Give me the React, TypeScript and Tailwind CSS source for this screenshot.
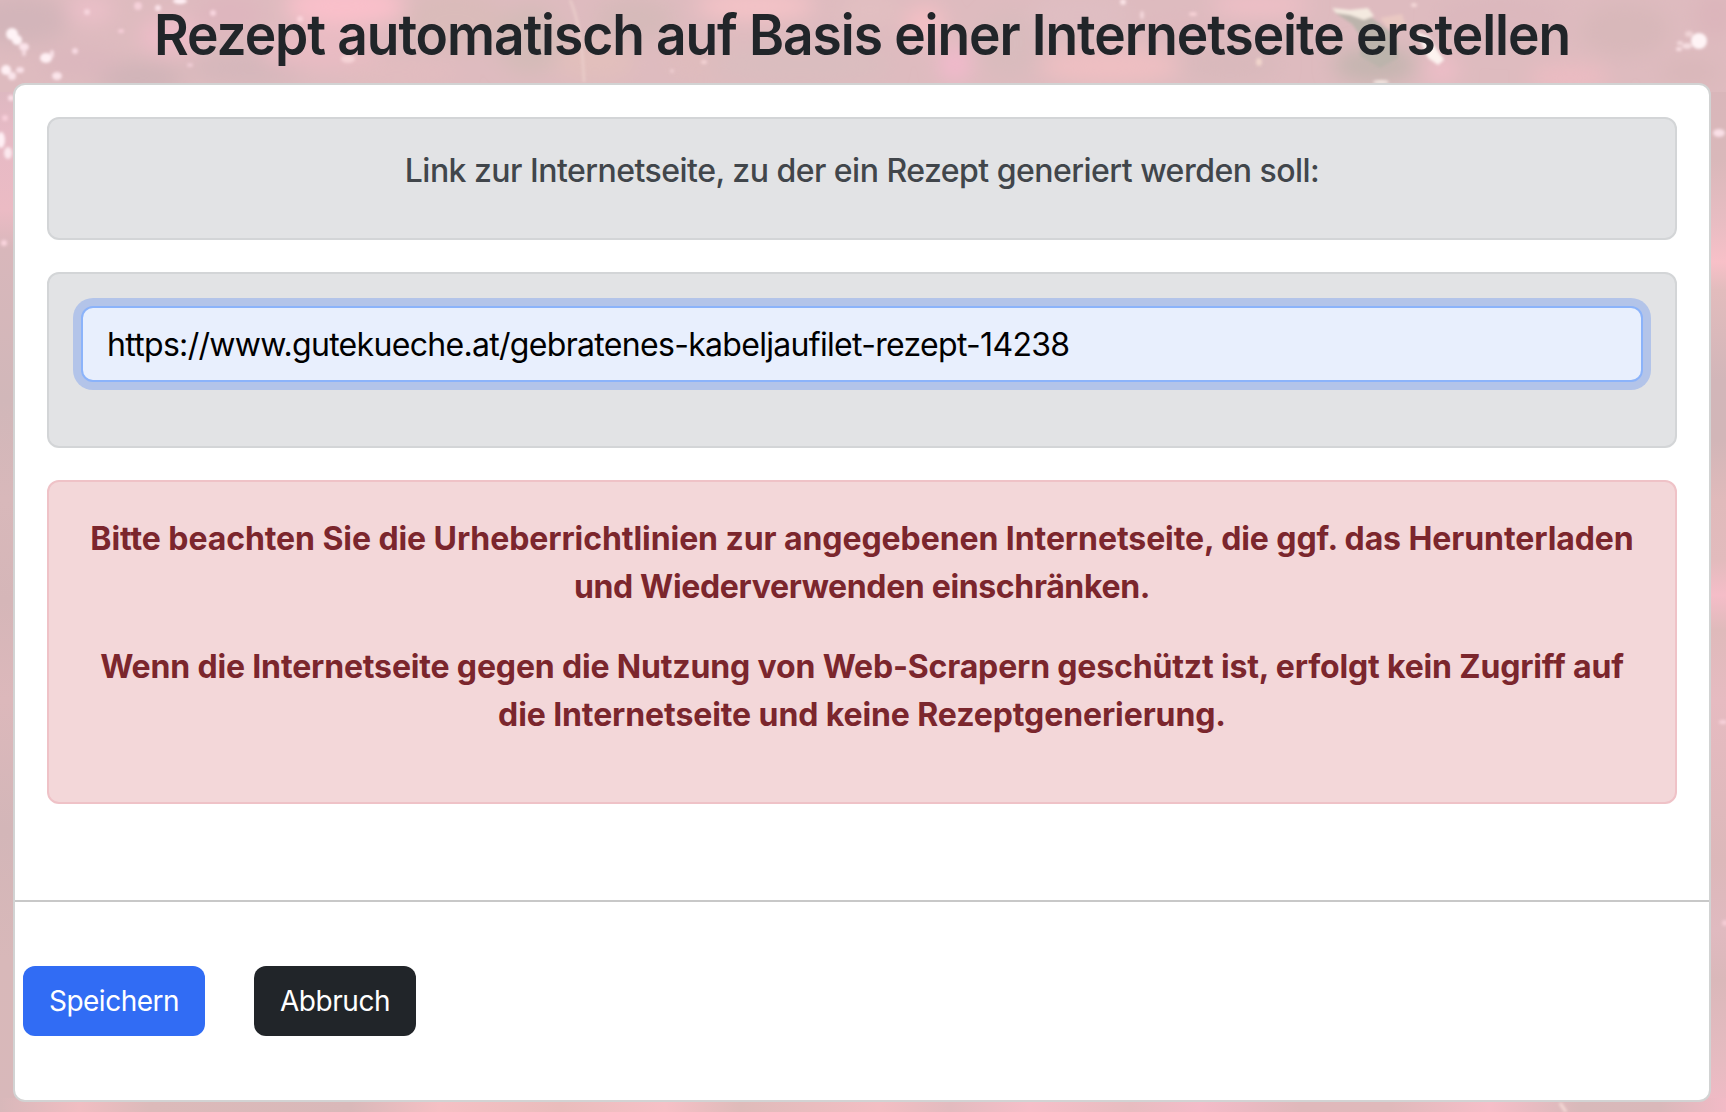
import React from 'react';

type Blob = { x: number; y: number; rx: number; ry: number; fill: string };
type Stop = [number, string];

const blobs: Blob[] = [
  { x: 20, y: 20, rx: 50, ry: 25, fill: '#d3b5ba' },
  { x: 90, y: 10, rx: 24, ry: 12, fill: '#ecbfc9' },
  { x: 140, y: 78, rx: 45, ry: 16, fill: '#d0b4b8' },
  { x: 170, y: 36, rx: 30, ry: 18, fill: '#eebcc8' },
  { x: 80, y: 62, rx: 40, ry: 16, fill: '#dcb7be' },
  { x: 230, y: 15, rx: 35, ry: 20, fill: '#deb6be' },
  { x: 250, y: 68, rx: 60, ry: 18, fill: '#d5b7bb' },
  { x: 345, y: 6, rx: 60, ry: 20, fill: '#fac0ca' },
  { x: 320, y: 50, rx: 60, ry: 20, fill: '#e9bbc3' },
  { x: 400, y: 72, rx: 60, ry: 14, fill: '#e2bcbf' },
  { x: 455, y: 20, rx: 50, ry: 30, fill: '#dabbba' },
  { x: 530, y: 40, rx: 34, ry: 34, fill: '#d4bbb8' },
  { x: 595, y: 60, rx: 40, ry: 20, fill: '#e2bfbc' },
  { x: 635, y: 20, rx: 40, ry: 22, fill: '#d6bab9' },
  { x: 700, y: 60, rx: 40, ry: 20, fill: '#dfbcbd' },
  { x: 755, y: 6, rx: 60, ry: 14, fill: '#f5c3c7' },
  { x: 800, y: 65, rx: 90, ry: 20, fill: '#dabdbf' },
  { x: 870, y: 10, rx: 30, ry: 16, fill: '#e2bfc1' },
  { x: 925, y: 25, rx: 20, ry: 20, fill: '#f4bfc5' },
  { x: 955, y: 64, rx: 16, ry: 18, fill: '#f2b9cc' },
  { x: 1010, y: 45, rx: 30, ry: 34, fill: '#d9bbbd' },
  { x: 1080, y: 15, rx: 50, ry: 20, fill: '#dfbec2' },
  { x: 1110, y: 66, rx: 70, ry: 18, fill: '#efbfc2' },
  { x: 1185, y: 32, rx: 40, ry: 12, fill: '#dfb8be' },
  { x: 1260, y: 5, rx: 50, ry: 10, fill: '#f2c0c8' },
  { x: 1230, y: 65, rx: 50, ry: 18, fill: '#d9b9bc' },
  { x: 1375, y: 65, rx: 42, ry: 18, fill: '#c5b5b0' },
  { x: 1442, y: 70, rx: 16, ry: 14, fill: '#efbdc8' },
  { x: 1500, y: 20, rx: 65, ry: 26, fill: '#dcb8bd' },
  { x: 1570, y: 78, rx: 40, ry: 14, fill: '#ecbcc2' },
  { x: 1625, y: 30, rx: 45, ry: 26, fill: '#d8b8ba' },
  { x: 1690, y: 72, rx: 30, ry: 14, fill: '#d9b7ba' },
  { x: 1715, y: 15, rx: 20, ry: 24, fill: '#dcb5bb' },
];

const flecks: Blob[] = [
  { x: 12, y: 34, rx: 6, ry: 6, fill: '#fff3f6' },
  { x: 17, y: 40, rx: 5, ry: 5, fill: '#fff3f6' },
  { x: 24, y: 47, rx: 5, ry: 4, fill: '#fbe3ea' },
  { x: 24, y: 53, rx: 2, ry: 3, fill: '#f6dbe2' },
  { x: 46, y: 58, rx: 6, ry: 5, fill: '#fff0f4' },
  { x: 52, y: 54, rx: 2, ry: 4, fill: '#f8e0e6' },
  { x: 6, y: 70, rx: 5, ry: 5, fill: '#fff0f4' },
  { x: 12, y: 76, rx: 4, ry: 4, fill: '#fae4ea' },
  { x: 20, y: 70, rx: 4, ry: 3, fill: '#f9e0e7' },
  { x: 57, y: 76, rx: 5, ry: 4, fill: '#fbe4ea' },
  { x: 75, y: 51, rx: 3, ry: 3, fill: '#f8dae2' },
  { x: 87, y: 12, rx: 3, ry: 3, fill: '#f7d5dd' },
  { x: 121, y: 31, rx: 3, ry: 2, fill: '#f6ced8' },
  { x: 138, y: 6, rx: 4, ry: 4, fill: '#f5d0d9' },
  { x: 158, y: 8, rx: 3, ry: 3, fill: '#fbe3ea' },
  { x: 180, y: 1, rx: 7, ry: 3, fill: '#fff0f4' },
  { x: 213, y: 13, rx: 3, ry: 3, fill: '#f8d5df' },
  { x: 190, y: 65, rx: 3, ry: 2, fill: '#efccd4' },
  { x: 300, y: 19, rx: 3, ry: 3, fill: '#fbd3da' },
  { x: 348, y: 59, rx: 7, ry: 4, fill: '#f5d3d6' },
  { x: 704, y: 62, rx: 3, ry: 2, fill: '#f4d3d5' },
  { x: 672, y: 71, rx: 2, ry: 2, fill: '#efcfd1' },
  { x: 1123, y: 2, rx: 3, ry: 3, fill: '#fae3e6' },
  { x: 1142, y: 15, rx: 2, ry: 4, fill: '#f3d6da' },
  { x: 1193, y: 14, rx: 4, ry: 2, fill: '#f7d2d6' },
  { x: 1259, y: 62, rx: 3, ry: 4, fill: '#f1d5cc' },
  { x: 1414, y: 5, rx: 3, ry: 2, fill: '#f5d9d9' },
  { x: 1381, y: 82, rx: 8, ry: 2, fill: '#f3e6e1' },
  { x: 1699, y: 41, rx: 8, ry: 8, fill: '#fff4f6' },
  { x: 1687, y: 46, rx: 5, ry: 3, fill: '#f5dde0' },
  { x: 1679, y: 49, rx: 3, ry: 2, fill: '#f8dee2' },
  { x: 1680, y: 43, rx: 3, ry: 2, fill: '#f3d9dc' },
  { x: 1689, y: 34, rx: 4, ry: 3, fill: '#f0d3d6' },
  { x: 11, y: 98, rx: 3, ry: 3, fill: '#fce0e8' },
  { x: 5, y: 118, rx: 3, ry: 3, fill: '#f8cfda' },
  { x: 1, y: 140, rx: 4, ry: 8, fill: '#fff0f5' },
  { x: 8, y: 153, rx: 4, ry: 6, fill: '#fce8ee' },
  { x: 4, y: 243, rx: 3, ry: 3, fill: '#fad5de' },
  { x: 1719, y: 133, rx: 6, ry: 4, fill: '#fae0e7' },
  { x: 1723, y: 722, rx: 4, ry: 2, fill: '#f9d3dc' },
  { x: 1725, y: 923, rx: 3, ry: 3, fill: '#f6cdd6' },
];

const leftStops: Stop[] = [
  [83, '#dcb8c0'],
  [130, '#e6bac5'],
  [210, '#ebbbc4'],
  [250, '#d8b7bb'],
  [400, '#d1b7b9'],
  [500, '#d8b8ba'],
  [600, '#d5b6b8'],
  [700, '#dcb8bb'],
  [830, '#d3b6b8'],
  [960, '#d8b8b9'],
  [1112, '#d8b8ba'],
];

const rightStops: Stop[] = [
  [83, '#d9b6ba'],
  [160, '#d9b8ba'],
  [225, '#e9bdc3'],
  [262, '#f8c0c8'],
  [290, '#e2bcbd'],
  [380, '#d2b6b9'],
  [440, '#d2b6b8'],
  [500, '#e0babb'],
  [560, '#e2bbbd'],
  [595, '#f5bdc8'],
  [630, '#dfbabb'],
  [700, '#e6bbc1'],
  [860, '#dcb8ba'],
  [930, '#e0bac0'],
  [980, '#dab8ba'],
  [1060, '#e6bbc1'],
  [1112, '#f2bac6'],
];

const bottomStops: Stop[] = [
  [0, '#d8b8ba'],
  [80, '#f1bdc2'],
  [150, '#dcbaba'],
  [350, '#d9b8b9'],
  [440, '#f6bfc4'],
  [560, '#eabcbc'],
  [665, '#f7bfc6'],
  [740, '#dfbbba'],
  [880, '#f4bdc3'],
  [950, '#e3bbbf'],
  [1030, '#f7bdc8'],
  [1130, '#e8bcc0'],
  [1200, '#f5bac8'],
  [1300, '#e0b8bb'],
  [1390, '#e0b9bb'],
  [1490, '#f7bdc8'],
  [1580, '#d8b9ba'],
  [1660, '#dab8ba'],
  [1726, '#f2bac6'],
];

const Stops: React.FC<{ stops: Stop[]; size: number }> = ({ stops, size }) => (
  <>
    {stops.map(([at, color]) => (
      <stop key={at} offset={at / size} stopColor={color} />
    ))}
  </>
);

const Backdrop: React.FC = () => (
  <svg className="absolute inset-0 -z-10" width="1726" height="1112" viewBox="0 0 1726 1112">
    <defs>
      <filter id="soft" x="-10%" y="-50%" width="120%" height="200%">
        <feGaussianBlur stdDeviation="10" />
      </filter>
      <filter id="fleck" x="-10%" y="-10%" width="120%" height="120%">
        <feGaussianBlur stdDeviation="1.4" />
      </filter>
      <linearGradient id="left" gradientUnits="userSpaceOnUse" x1="0" y1="0" x2="0" y2="1112">
        <Stops stops={leftStops} size={1112} />
      </linearGradient>
      <linearGradient id="right" gradientUnits="userSpaceOnUse" x1="0" y1="0" x2="0" y2="1112">
        <Stops stops={rightStops} size={1112} />
      </linearGradient>
      <linearGradient id="bottom" gradientUnits="userSpaceOnUse" x1="0" y1="0" x2="1726" y2="0">
        <Stops stops={bottomStops} size={1726} />
      </linearGradient>
    </defs>
    <rect width="1726" height="1112" fill="#debbbf" />
    <g filter="url(#soft)">
      {blobs.map((b, i) => (
        <ellipse key={i} cx={b.x} cy={b.y} rx={b.rx} ry={b.ry} fill={b.fill} />
      ))}
    </g>
    <rect y="92" width="30" height="1020" fill="url(#left)" />
    <rect x="1696" y="92" width="30" height="1020" fill="url(#right)" />
    <rect y="1098" width="1726" height="14" fill="url(#bottom)" />
    <g filter="url(#fleck)">
      <path d="M1334 12 L1352 24 L1362 38 L1360 56 L1380 68 L1398 58 L1396 36 L1372 18 Z" fill="#bcb4ac" />
      <path d="M1332 8 L1350 10 L1368 8 L1374 16 L1364 20 L1350 15 L1336 13 Z" fill="#f4eae0" />
      <path d="M1380 18 L1402 14 L1406 26 L1388 28 Z" fill="#e9c8c2" />
      <path d="M1416 32 L1428 36 L1436 48 L1444 60 L1438 65 L1428 58 Z" fill="#fdf3f0" />
      <path d="M570 0 Q582 26 584 82" stroke="#ecd0cc" strokeWidth="2" fill="none" />
      {flecks.map((b, i) => (
        <ellipse key={i} cx={b.x} cy={b.y} rx={b.rx} ry={b.ry} fill={b.fill} />
      ))}
      <path d="M1560 1103 L1566 1112" stroke="#f6dcd8" strokeWidth="3" />
    </g>
  </svg>
);

const App: React.FC = () => {
  return (
    <div className="relative isolate h-[1112px] w-[1726px] overflow-hidden pr-[15px] pl-[13px] font-['Inter',sans-serif] text-[#212529]">
      <Backdrop />
      <h1 className="h-[83px] scale-x-[0.952] pt-0.5 text-center text-[56px] leading-[67px] font-[560] tracking-[-1.15px] whitespace-nowrap">
        Rezept automatisch auf Basis einer Internetseite erstellen
      </h1>

      <div className="h-[1019px] rounded-xl border-2 border-[#d2d3d3] bg-white">
        <div className="flex flex-col gap-8 px-8 pt-8">
          <div className="h-[123px] rounded-xl border-2 border-[#d3d5d7] bg-[#e2e3e5] pt-[28px] text-center text-[32px] leading-[48px] font-[540] tracking-[-0.52px] text-[#41464b]">
            Link zur Internetseite, zu der ein Rezept generiert werden soll:
          </div>

          <div className="h-[176px] rounded-xl border-2 border-[#d3d5d7] bg-[#e2e3e5] p-8">
            <input
              type="text"
              defaultValue="https://www.gutekueche.at/gebratenes-kabeljaufilet-rezept-14238"
              className="block h-[76px] w-full rounded-xl border-2 border-[#8bb3fa] bg-[#e8effd] px-6 text-[32px] tracking-[-0.69px] text-black ring-8 ring-[#b3c4e9] outline-none"
            />
          </div>

          <div className="h-[324px] rounded-xl border-2 border-[#efc2c7] bg-[#f3d7d9] pt-[33px] text-center text-[32px] leading-[48px] font-bold whitespace-nowrap text-[#7b262d]">
            <p className="mb-8">
              <span className="tracking-[-0.08px]">
                Bitte beachten Sie die Urheberrichtlinien zur angegebenen Internetseite, die ggf. das Herunterladen
              </span>
              <br />
              <span className="tracking-[-0.35px]">und Wiederverwenden einschränken.</span>
            </p>
            <p>
              <span className="tracking-[-0.16px]">
                Wenn die Internetseite gegen die Nutzung von Web-Scrapern geschützt ist, erfolgt kein Zugriff auf
              </span>
              <br />
              <span className="tracking-[-0.1px]">die Internetseite und keine Rezeptgenerierung.</span>
            </p>
          </div>
        </div>

        <hr className="mt-24 border-t-2 border-[#c8c8c8]" />

        <div className="mt-16 flex gap-[49px] pl-2 text-[28px] text-white">
          <button type="button" className="h-[70px] w-[182px] rounded-xl bg-[#316cf4] tracking-[-0.5px]">
            Speichern
          </button>
          <button type="button" className="h-[70px] w-[162px] rounded-xl bg-[#212529] tracking-[-0.45px]">
            Abbruch
          </button>
        </div>
      </div>
    </div>
  );
};

export default App;
